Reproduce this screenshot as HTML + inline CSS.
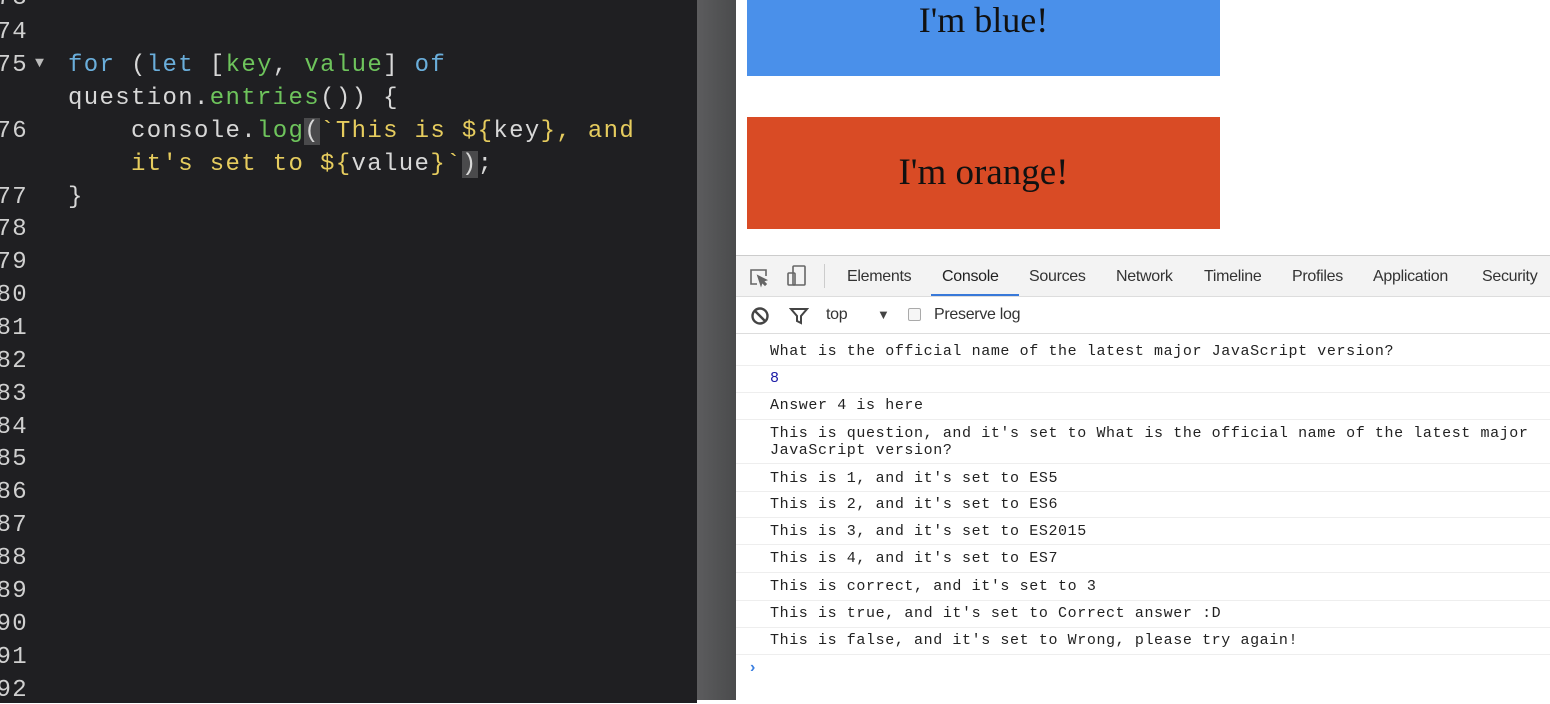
<!DOCTYPE html>
<html><head><meta charset="utf-8"><style>
*{margin:0;padding:0;box-sizing:border-box}
body{width:1550px;height:700px;overflow:hidden;position:relative;background:#fff;font-family:"Liberation Sans",sans-serif}
#ed{position:absolute;left:0;top:3px;width:697px;height:700px;background:#1f1f22;font-family:"Liberation Mono",monospace;font-size:24px;letter-spacing:1.35px;color:#d8d8d8}
#edbg{position:absolute;left:0;top:0;width:697px;height:700px;background:#1f1f22}
.ln{position:absolute;left:-40px;width:68px;text-align:right;color:#d0d0d0}
.cd{position:absolute;left:68px;white-space:pre}
.k{color:#6aaedb}.g{color:#6ec45c}.y{color:#e6cc5e}
.hl{background:#4a4a4c}
#bar{position:absolute;left:697px;top:0;width:39px;height:700px;background:linear-gradient(90deg,#5c5c5e,#4a4b4c)}
#blue{position:absolute;left:747px;top:0;width:473px;height:76px;background:#4a90ea;font-family:"Liberation Serif",serif;font-size:36px;text-align:center;line-height:40px;color:#111}
#org{position:absolute;left:747px;top:117px;width:473px;height:112px;background:#d94b25;font-family:"Liberation Serif",serif;font-size:37px;text-align:center;line-height:112px;color:#111}
#tb1{position:absolute;left:736px;top:255px;width:814px;height:42px;background:#f3f3f3;border-top:1px solid #ccc;border-bottom:1px solid #ddd;font-size:16px;color:#333;letter-spacing:-0.3px}
#tb1 span{position:absolute;top:12px}
#tb2{position:absolute;left:736px;top:297px;width:814px;height:37px;background:#fff;border-bottom:1px solid #ddd;font-size:16px;color:#333;letter-spacing:-0.3px}
.row{position:absolute;left:736px;width:814px;border-bottom:1px solid #eee;font-family:"Liberation Mono",monospace;font-size:15px;letter-spacing:0.6px;color:#222;padding-left:34px;line-height:17px;white-space:pre}
</style></head><body>
<div id="edbg"></div>
<div id="ed">
<div class="ln" style="top:-18px">73</div>
<div class="ln" style="top:16px">74</div>
<div class="ln" style="top:49px">75</div><div style="position:absolute;left:35px;top:52px;font-size:15px;color:#bbb">▼</div>
<div class="cd" style="top:49px"><span class="k">for</span> (<span class="k">let</span> [<span class="g">key</span>, <span class="g">value</span>] <span class="k">of</span></div>
<div class="cd" style="top:82px">question.<span class="g">entries</span>()) {</div>
<div class="ln" style="top:115px">76</div>
<div class="cd" style="top:115px">    console.<span class="g">log</span><span class="hl">(</span><span class="y">`This is ${</span>key<span class="y">}, and</span></div>
<div class="cd" style="top:148px"><span class="y">    it's set to ${</span>value<span class="y">}`</span><span class="hl">)</span>;</div>
<div class="ln" style="top:181px">77</div>
<div class="cd" style="top:181px">}</div>
<div class="ln" style="top:213px">78</div>
<div class="ln" style="top:246px">79</div>
<div class="ln" style="top:279px">80</div>
<div class="ln" style="top:312px">81</div>
<div class="ln" style="top:345px">82</div>
<div class="ln" style="top:378px">83</div>
<div class="ln" style="top:411px">84</div>
<div class="ln" style="top:443px">85</div>
<div class="ln" style="top:476px">86</div>
<div class="ln" style="top:509px">87</div>
<div class="ln" style="top:542px">88</div>
<div class="ln" style="top:575px">89</div>
<div class="ln" style="top:608px">90</div>
<div class="ln" style="top:641px">91</div>
<div class="ln" style="top:674px">92</div>
</div>
<div id="bar"></div>
<div id="blue">I'm blue!</div>
<div id="org">I'm orange!</div>
<div id="tb1">
<svg style="position:absolute;left:12px;top:10px" width="22" height="22" viewBox="0 0 22 22" fill="none" stroke="#666" stroke-width="1.6"><path d="M9 18H3V4h15v6"/><path d="M10 10l8 4-3 1 3 3-1 1-3-3-1 3z" fill="#666"/></svg>
<svg style="position:absolute;left:50px;top:8px" width="22" height="24" viewBox="0 0 22 24" fill="none" stroke="#666" stroke-width="1.6"><rect x="7" y="2" width="12" height="19" rx="1"/><rect x="2" y="9" width="7" height="12" rx="1"/></svg>
<div style="position:absolute;left:88px;top:8px;width:1px;height:24px;background:#ccc"></div>
<span style="left:111px">Elements</span>
<span style="left:206px;color:#222">Console</span>
<div style="position:absolute;left:195px;top:38px;width:88px;height:2px;background:#3879d9"></div>
<span style="left:293px">Sources</span>
<span style="left:380px">Network</span>
<span style="left:468px">Timeline</span>
<span style="left:556px">Profiles</span>
<span style="left:637px">Application</span>
<span style="left:746px">Security</span>
</div>
<div id="tb2">
<svg style="position:absolute;left:14px;top:9px" width="20" height="20" viewBox="0 0 20 20" fill="none" stroke="#444" stroke-width="2.4"><circle cx="10" cy="10" r="7.5"/><path d="M5 5l10 10"/></svg>
<svg style="position:absolute;left:53px;top:9px" width="20" height="20" viewBox="0 0 20 20" fill="none" stroke="#444" stroke-width="2"><path d="M2 3h16l-6 7v7l-4-2v-5z"/></svg>
<span style="position:absolute;left:90px;top:9px">top</span>
<span style="position:absolute;left:141px;top:10px;font-size:13px;color:#444">▼</span>
<div style="position:absolute;left:172px;top:11px;width:13px;height:13px;border:1px solid #aaa;border-radius:2px;background:#f6f6f6"></div>
<span style="position:absolute;left:198px;top:9px">Preserve log</span>
</div>
<div class="row" style="top:343px;height:23px">What is the official name of the latest major JavaScript version?</div>
<div class="row" style="top:370px;height:23px;color:#1a1aa6">8</div>
<div class="row" style="top:397px;height:23px">Answer 4 is here</div>
<div class="row" style="top:425px;height:39px">This is question, and it's set to What is the official name of the latest major
JavaScript version?</div>
<div class="row" style="top:470px;height:22px">This is 1, and it's set to ES5</div>
<div class="row" style="top:496px;height:22px">This is 2, and it's set to ES6</div>
<div class="row" style="top:523px;height:22px">This is 3, and it's set to ES2015</div>
<div class="row" style="top:550px;height:23px">This is 4, and it's set to ES7</div>
<div class="row" style="top:578px;height:23px">This is correct, and it's set to 3</div>
<div class="row" style="top:605px;height:23px">This is true, and it's set to Correct answer :D</div>
<div class="row" style="top:632px;height:23px">This is false, and it's set to Wrong, please try again!</div>
<div style="position:absolute;left:750px;top:659px;color:#3b7fe0;font-size:16px;font-weight:bold">›</div>
</body></html>
